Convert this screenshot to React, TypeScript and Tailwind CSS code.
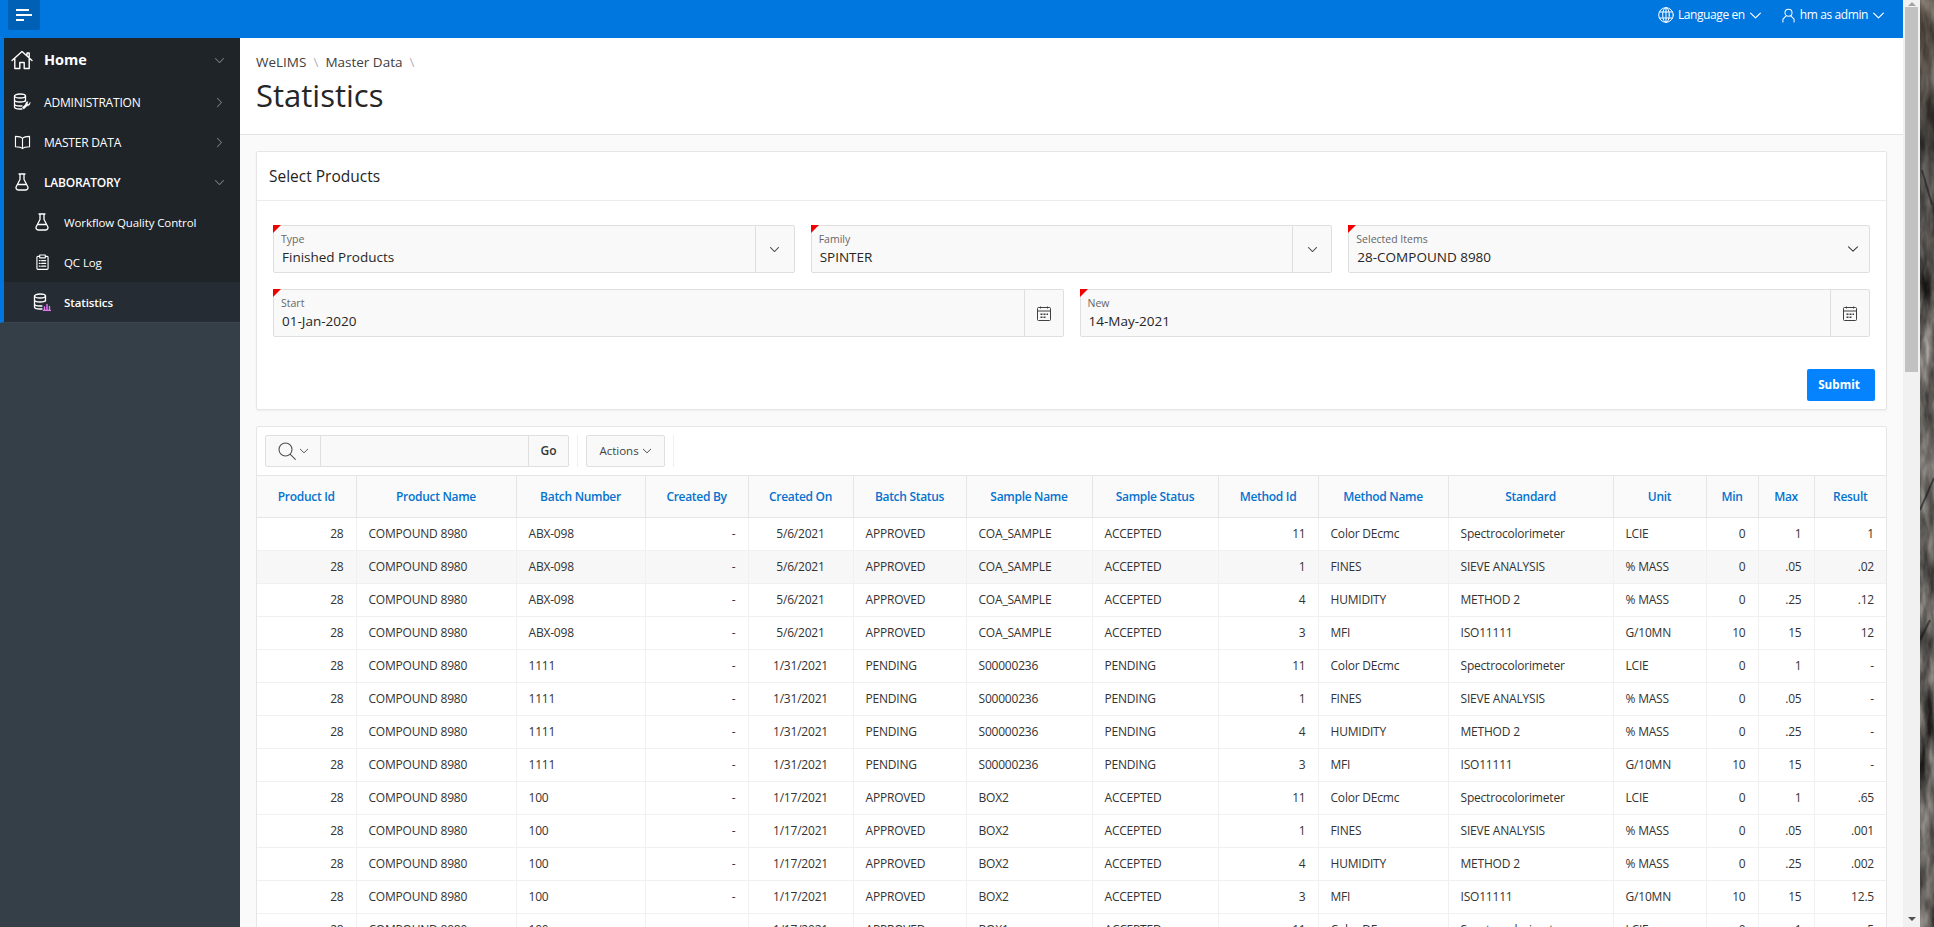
import React from "react";

const S = { fill: "none", stroke: "currentColor", strokeWidth: 1.1, strokeLinecap: "round" as const, strokeLinejoin: "round" as const };

const Chevron = ({ dir = "down", className = "" }: { dir?: "down" | "right"; className?: string }) => (
  <svg viewBox="0 0 12 12" className={className} {...S}>
    {dir === "down" ? <path d="M1.5 3.8 6 8.2l4.5-4.4" /> : <path d="M3.8 1.5 8.2 6l-4.4 4.5" />}
  </svg>
);

const HomeIcon = () => (
  <svg viewBox="0 0 22 20" className="w-[22px] h-[20px]" {...S} strokeWidth={1.4}>
    <path d="M1 10.5 11 1.5l10 9M16 6V3h2.2v5M3.8 9v9.5h5V12.5h4.4v6h5V9" />
  </svg>
);
const DbCyl = () => (
  <>
    <ellipse cx="7" cy="3" rx="5.5" ry="2" />
    <path d="M1.5 3v11c0 1.2 2.5 2 5.5 2h2M1.5 7c0 1.2 2.5 2 5.5 2s5.500-.8 5.500-2M1.500 11c0 1.200 2.500 2 5.500 2h2M12.500 3v5" />
  </>
);
const DbWrenchIcon = () => (
  <svg viewBox="0 0 18 18" className="w-[18px] h-[18px]" {...S} strokeWidth={1.3}>
    <DbCyl />
    <path d="M17 9.800 15.300 11.500l-1-.8.500-2c-1.300-.2-2.300 1-2 2.300L9.500 14.500 10.800 16l3.300-3.200c1.700.3 3-1 2.900-3z" fill="currentColor" strokeWidth={0.6} />
  </svg>
);
const BookIcon = () => (
  <svg viewBox="0 0 18 16" className="w-[17px] h-[15px]" {...S} strokeWidth={1.2}>
    <path d="M9 3.500C7.500 2 4.500 1.500 1.500 1.500v11c3 0 6 .3 7.500 2 1.500-1.700 4.500-2 7.500-2v-11c-3 0-6 .5-7.500 2zM9 3.500v11" />
  </svg>
);
const FlaskIcon = () => (
  <svg viewBox="0 0 14 18" className="w-[14px] h-[18px]" {...S} strokeWidth={1.3}>
    <path d="M4 1h6M5 1v5.500L1.300 13.500C.5 15.200 1.500 17 3.300 17h7.400c1.800 0 2.800-1.800 2-3.500L9 6.500V1M3.200 11.500h7.600" />
  </svg>
);
const ClipboardIcon = () => (
  <svg viewBox="0 0 14 17" className="w-[13px] h-[16px]" {...S} strokeWidth={1.2}>
    <path d="M4 2.500H2A1 1 0 0 0 1 3.500v12a1 1 0 0 0 1 1h10a1 1 0 0 0 1-1v-12a1 1 0 0 0-1-1h-2M4 1h6v3H4zM3.500 7h1M6 7h4.500M3.500 10h1M6 10h4.500M3.500 13h1M6 13h4.500" />
  </svg>
);
const DbChartIcon = () => (
  <svg viewBox="0 0 18 18" className="w-[18px] h-[18px]" {...S} strokeWidth={1.3}>
    <DbCyl />
    <path d="M10.500 17.500h7M11.500 17v-3M14 17v-5.500M16.500 17v-3.500" stroke="#e879f9" strokeWidth={1.400} />
  </svg>
);
const GlobeIcon = () => (
  <svg viewBox="0 0 16 16" className="w-[16px] h-[16px]" {...S} strokeWidth={1}>
    <circle cx="8" cy="8" r="7.300" />
    <ellipse cx="8" cy="8" rx="3.300" ry="7.300" />
    <path d="M1.500 5h13M1.500 11h13M8 .7v14.600" />
  </svg>
);
const UserIcon = () => (
  <svg viewBox="0 0 14 16" className="w-[13px] h-[15px]" {...S} strokeWidth={1.1}>
    <circle cx="7" cy="5" r="3.800" />
    <path d="M4.500 8.500 1 12v3M9.500 8.500 13 12v3" />
  </svg>
);
const CalendarIcon = () => (
  <svg viewBox="0 0 14 15" className="w-[14px] h-[15px] text-[#404040]" fill="none" stroke="currentColor" strokeWidth={1}>
    <rect x="0.500" y="1.500" width="13" height="13" rx="1" />
    <path d="M.5 5h13M3.500.5v2M10.500.5v2" />
    <path d="M3.500 7.500h2v1.500h-2zM6.500 7.500h2v1.500h-2zM9.500 7.500h1.500v1.500h-1.500zM3.500 10.500h2v1.500h-2zM6.500 10.500h2v1.500h-2z" fill="currentColor" stroke="none" />
  </svg>
);
const SearchIcon = () => (
  <svg viewBox="0 0 18 18" className="w-[18px] h-[18px] text-[#505050]" fill="none" stroke="currentColor" strokeWidth={1.100} strokeLinecap="round">
    <circle cx="7.500" cy="7.500" r="6.500" />
    <path d="m12.300 12.300 5 5" />
  </svg>
);

const NavRow = ({ icon, label, chevron, sub, active, bold, semi, tall }: { icon: React.ReactNode; label: string; chevron?: "down" | "right"; sub?: boolean; active?: boolean; bold?: boolean; semi?: boolean; tall?: boolean }) => {
  const text = bold
    ? "font-bold text-[14.5px]"
    : sub
      ? `text-[11.5px] tracking-[-0.1px] pt-[2px] ${active ? "font-semibold" : ""}`
      : `text-[12px] tracking-[-0.2px] pt-[2px] ${semi ? "font-semibold" : ""}`;
  return (
    <div className={`flex items-center text-white ${tall ? "h-[44px]" : "h-[40px]"} ${active ? "bg-[#262c34]" : ""} ${sub ? "pl-[26px]" : "pl-[6px]"}`}>
      <div className="w-[24px] flex justify-center shrink-0">{icon}</div>
      <span className={`ml-[10px] flex-1 ${text}`}>{label}</span>
      {chevron && <Chevron dir={chevron} className="w-[11px] h-[11px] mr-[15px] text-[#70787f]" />}
    </div>
  );
};

const Field = ({ label, value, addon }: { label: string; value: string; addon: "select" | "plain" | "date" }) => (
  <div className="relative h-[48px] flex bg-[#f9f9f9] border border-[#dfdfdf] rounded-[2px]">
    <div className="absolute left-[-1px] top-[-1px] w-0 h-0 border-t-[8px] border-r-[8px] border-t-[#f00000] border-r-transparent" />
    <div className="flex-1 pl-[7px] pt-[6px] min-w-0">
      <div className="text-[10.5px] leading-[14px] text-[#666]">{label}</div>
      <div className="text-[13.5px] leading-[20px] mt-[1px] ml-[1px] text-[#262626]">{value}</div>
    </div>
    {addon === "plain" ? (
      <div className="w-[33px] flex items-center justify-center">
        <Chevron className="w-[12px] h-[12px] text-[#404040]" />
      </div>
    ) : (
      <div className="w-[39px] flex items-center justify-center border-l border-[#dfdfdf]">
        {addon === "select" ? <Chevron className="w-[11px] h-[11px] text-[#505050]" /> : <CalendarIcon />}
      </div>
    )}
  </div>
);

const columns: { name: string; w: string; align: string }[] = [
  { name: "Product Id", w: "w-[99px]", align: "text-right" },
  { name: "Product Name", w: "w-[160px]", align: "text-left" },
  { name: "Batch Number", w: "w-[129px]", align: "text-left" },
  { name: "Created By", w: "w-[103px]", align: "text-right" },
  { name: "Created On", w: "w-[105px]", align: "text-center" },
  { name: "Batch Status", w: "w-[113px]", align: "text-left" },
  { name: "Sample Name", w: "w-[126px]", align: "text-left" },
  { name: "Sample Status", w: "w-[126px]", align: "text-left" },
  { name: "Method Id", w: "w-[100px]", align: "text-right" },
  { name: "Method Name", w: "w-[130px]", align: "text-left" },
  { name: "Standard", w: "w-[165px]", align: "text-left" },
  { name: "Unit", w: "w-[93px]", align: "text-left" },
  { name: "Min", w: "w-[52px]", align: "text-right" },
  { name: "Max", w: "w-[56px]", align: "text-right" },
  { name: "Result", w: "w-[72px]", align: "text-right" },
];

const methods = [
  ["11", "Color DEcmc", "Spectrocolorimeter", "LCIE", "0", "1"],
  ["1", "FINES", "SIEVE ANALYSIS", "% MASS", "0", ".05"],
  ["4", "HUMIDITY", "METHOD 2", "% MASS", "0", ".25"],
  ["3", "MFI", "ISO11111", "G/10MN", "10", "15"],
];

const group = (batch: string, date: string, bs: string, sample: string, ss: string, results: string[]) =>
  results.map((r, i) => ["28", "COMPOUND 8980", batch, "-", date, bs, sample, ss, ...methods[i], r]);

const rows = [
  ...group("ABX-098", "5/6/2021", "APPROVED", "COA_SAMPLE", "ACCEPTED", ["1", ".02", ".12", "12"]),
  ...group("1111", "1/31/2021", "PENDING", "S00000236", "PENDING", ["-", "-", "-", "-"]),
  ...group("100", "1/17/2021", "APPROVED", "BOX2", "ACCEPTED", [".65", ".001", ".002", "12.5"]),
  ...group("100", "1/17/2021", "APPROVED", "BOX1", "ACCEPTED", [".5"]),
];

export default function App() {
  return (
    <div className="w-[1934px] h-[927px] overflow-hidden flex font-['Open_Sans','Noto_Sans',sans-serif] text-[#262626]">
      <div className="w-[1903px] flex flex-col shrink-0">
        <header className="h-[38px] shrink-0 bg-[#0076df] flex items-start justify-between pl-[8px] pr-[18px] text-white">
          <button className="w-[32px] h-[30px] bg-[#0060b5] rounded-b-[2px] flex flex-col justify-center gap-[3px] pl-[8px]">
            <span className="block w-[13px] h-[2px] bg-white" />
            <span className="block w-[16px] h-[2px] bg-white" />
            <span className="block w-[8px] h-[2px] bg-white" />
          </button>
          <div className="flex items-center h-[30px] text-[12px] tracking-[-0.4px]">
            <GlobeIcon />
            <span className="ml-[4px]">Language en</span>
            <Chevron className="w-[13px] h-[13px] ml-[4px]" />
            <div className="w-[20px]" />
            <UserIcon />
            <span className="ml-[5px]">hm as admin</span>
            <Chevron className="w-[13px] h-[13px] ml-[4px]" />
          </div>
        </header>
        <div className="flex flex-1 min-h-0">
          <aside className="w-[240px] shrink-0 bg-[#353f48]">
            <nav className="bg-[#1f2429] border-l-[4px] border-[#0076df] border-b-[1px] border-b-[#3c454e]">
              <NavRow tall bold icon={<HomeIcon />} label="Home" chevron="down" />
              <NavRow icon={<DbWrenchIcon />} label="ADMINISTRATION" chevron="right" />
              <NavRow icon={<BookIcon />} label="MASTER DATA" chevron="right" />
              <NavRow semi icon={<FlaskIcon />} label="LABORATORY" chevron="down" />
              <NavRow sub icon={<FlaskIcon />} label="Workflow Quality Control" />
              <NavRow sub icon={<ClipboardIcon />} label="QC Log" />
              <NavRow sub active icon={<DbChartIcon />} label="Statistics" />
            </nav>
          </aside>
          <main className="flex-1 min-w-0 bg-[#fafafa] overflow-hidden">
            <div className="h-[97px] bg-white border-b border-[#e4e4e4] pl-[16px] pt-[14px]">
              <div className="flex items-center text-[13.5px] leading-[20px] text-[#404040]">
                <span>WeLIMS</span>
                <span className="mx-[7px] text-[#b5b5b5]">\</span>
                <span>Master Data</span>
                <span className="ml-[7px] text-[#b5b5b5]">\</span>
              </div>
              <h1 className="text-[31px] leading-[40px] mt-[3px] font-medium text-[#262626]">Statistics</h1>
            </div>
            <div className="px-[16px] pt-[16px] flex flex-col gap-[16px]">
              <section className="bg-white border border-[#e6e6e6] rounded-[2px] shadow-[0_1px_2px_rgba(0,0,0,0.05)] h-[259px]">
                <div className="h-[49px] border-b border-[#ececec] flex items-center pl-[12px] pt-[1px] text-[15.5px] font-medium text-[#1f1f1f]">Select Products</div>
                <div className="pt-[24px] px-[16px]">
                  <div className="grid grid-cols-3 gap-[16px]">
                    <Field label="Type" value="Finished Products" addon="select" />
                    <Field label="Family" value="SPINTER" addon="select" />
                    <Field label="Selected Items" value="28-COMPOUND 8980" addon="plain" />
                  </div>
                  <div className="grid grid-cols-2 gap-[16px] mt-[16px]">
                    <Field label="Start" value="01-Jan-2020" addon="date" />
                    <Field label="New" value="14-May-2021" addon="date" />
                  </div>
                  <div className="flex justify-end mt-[32px]">
                    <button className="w-[68px] h-[32px] mr-[-5px] pr-[4px] bg-[#0583ff] text-white text-[11.7px] font-bold rounded-[2px]">Submit</button>
                  </div>
                </div>
              </section>
              <section className="bg-white border border-[#e6e6e6] rounded-[2px]">
                <div className="h-[48px] flex items-start pt-[8px] pl-[8px]">
                  <div className="flex h-[32px] w-[304px] border border-[#dfdfdf] rounded-[2px] bg-[#f9f9f9]">
                    <div className="w-[55px] flex items-center justify-center gap-[3px] border-r border-[#dfdfdf]">
                      <SearchIcon />
                      <Chevron className="w-[10px] h-[10px] text-[#505050]" />
                    </div>
                    <input className="flex-1 min-w-0 bg-transparent outline-none" aria-label="Search" />
                    <div className="w-[40px] flex items-center justify-center border-l border-[#dfdfdf] text-[12px] font-semibold text-[#333]">Go</div>
                  </div>
                  <div className="w-px h-[32px] bg-[#f0f0f0] ml-[8px]" />
                  <div className="flex items-center justify-center gap-[3px] w-[79px] h-[32px] ml-[8px] border border-[#dfdfdf] rounded-[2px] bg-[#f9f9f9] text-[11.5px] text-[#444]">
                    Actions
                    <Chevron className="w-[10px] h-[10px]" />
                  </div>
                  <div className="w-px h-[32px] bg-[#f0f0f0] ml-[8px]" />
                </div>
                <table className="w-full table-fixed border-collapse text-[12px] tracking-[-0.2px]">
                  <colgroup>
                    {columns.map((c) => (
                      <col key={c.name} className={c.w} />
                    ))}
                  </colgroup>
                  <thead>
                    <tr className="h-[42px] bg-[#fafafa]">
                      {columns.map((c, i) => (
                        <th key={c.name} className={`border-y border-[#e6e6e6] font-semibold tracking-[-0.3px] text-[#0572ce] text-center ${i ? "border-l" : ""}`}>{c.name}</th>
                      ))}
                    </tr>
                  </thead>
                  <tbody>
                    {rows.map((r, ri) => (
                      <tr key={ri} className={`h-[33px] ${ri === 1 ? "bg-[#f7f7f7]" : ""}`}>
                        {r.map((v, i) => (
                          <td key={i} className={`border-b border-[#f0f0f0] px-[12px] text-[#333] whitespace-nowrap ${columns[i].align} ${i ? "border-l" : ""}`}>{v}</td>
                        ))}
                      </tr>
                    ))}
                  </tbody>
                </table>
              </section>
            </div>
          </main>
        </div>
      </div>
      <div className="w-[17px] shrink-0 bg-[#f1f1f1] flex flex-col items-center relative">
        <div className="w-0 h-0 mt-[2px] border-x-[4px] border-b-[4px] border-x-transparent border-b-[#a3a3a3]" />
        <div className="w-[13px] h-[365px] mt-[1px] bg-[#c1c1c1]" />
        <div className="w-0 h-0 absolute bottom-[6px] border-x-[4px] border-t-[4px] border-x-transparent border-t-[#505050]" />
      </div>
      <svg className="w-[14px] h-[927px] shrink-0" viewBox="0 0 14 927" preserveAspectRatio="none" aria-hidden="true">
        <defs>
          <filter id="rock" x="0" y="0" width="100%" height="100%" colorInterpolationFilters="sRGB">
            <feTurbulence type="fractalNoise" baseFrequency="0.07 0.02" numOctaves="4" seed="7" />
            <feColorMatrix values="0.9 0.9 0 0 -0.5 0.88 0.88 0 0 -0.5 0.86 0.86 0 0 -0.5 0 0 0 0 1" />
          </filter>
          <linearGradient id="shade" x1="0" y1="0" x2="0" y2="1">
            <stop offset="0" stopColor="#6b5f4e" stopOpacity="0.4" />
            <stop offset="0.16" stopColor="#111" stopOpacity="0.55" />
            <stop offset="0.3" stopColor="#444" stopOpacity="0.3" />
            <stop offset="0.55" stopColor="#777" stopOpacity="0.3" />
            <stop offset="1" stopColor="#333" stopOpacity="0.35" />
          </linearGradient>
        </defs>
        <rect width="14" height="927" filter="url(#rock)" />
        <rect width="14" height="927" fill="url(#shade)" />
        <path d="M0 510 14 478M2 170 12 205M0 640 10 620" stroke="#1a1a1a" strokeOpacity="0.6" strokeWidth="2" fill="none" />
      </svg>
    </div>
  );
}
